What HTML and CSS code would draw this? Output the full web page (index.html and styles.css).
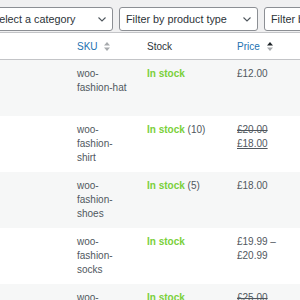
FILE: index.html
```html
<!DOCTYPE html>
<html lang="en">
<head>
    <meta charset="UTF-8">
    <meta name="viewport" content="width=device-width, initial-scale=1.0">
    <title>Products</title>
    <link rel="stylesheet" href="styles.css">
</head>
<body>

    <div class="filters">
        <select class="filter-select first">
            <option>Select a category</option>
        </select>
        <select class="filter-select">
            <option>Filter by product type</option>
        </select>
        <select class="filter-select">
            <option>Filter by stock status</option>
        </select>
    </div>

    <table class="products">
        <colgroup>
            <col class="col-name">
            <col class="col-sku">
            <col class="col-stock">
            <col class="col-price">
            <col class="col-rest">
        </colgroup>
        <thead>
            <tr>
                <th></th>
                <th class="sortable">
                    <a href="#">SKU
                        <svg class="sort-icon" width="6" height="9" viewBox="0 0 6 9">
                            <path d="M3 0 L6 3.5 H0 Z" fill="#a7aaad"/>
                            <path d="M3 9 L6 5.5 H0 Z" fill="#a7aaad"/>
                        </svg>
                    </a>
                </th>
                <th>Stock</th>
                <th class="sortable">
                    <a href="#">Price
                        <svg class="sort-icon" width="6" height="9" viewBox="0 0 6 9">
                            <path d="M3 0 L6 3.5 H0 Z" fill="#1d2327"/>
                            <path d="M3 9 L6 5.5 H0 Z" fill="#a7aaad"/>
                        </svg>
                    </a>
                </th>
                <th></th>
            </tr>
        </thead>
        <tbody>
            <tr>
                <td></td>
                <td>woo-fashion-hat</td>
                <td><mark class="instock">In stock</mark></td>
                <td>£12.00</td>
                <td></td>
            </tr>
            <tr>
                <td></td>
                <td>woo-fashion-shirt</td>
                <td><mark class="instock">In stock</mark> (10)</td>
                <td><del>£20.00</del> <ins>£18.00</ins></td>
                <td></td>
            </tr>
            <tr>
                <td></td>
                <td>woo-fashion-shoes</td>
                <td><mark class="instock">In stock</mark> (5)</td>
                <td>£18.00</td>
                <td></td>
            </tr>
            <tr>
                <td></td>
                <td>woo-fashion-socks</td>
                <td><mark class="instock">In stock</mark></td>
                <td>£19.99 – £20.99</td>
                <td></td>
            </tr>
            <tr>
                <td></td>
                <td>woo-fashion-sweater</td>
                <td><mark class="instock">In stock</mark></td>
                <td><del>£25.00</del> <ins>£20.00</ins></td>
                <td></td>
            </tr>
        </tbody>
    </table>

</body>
</html>
```

FILE: styles.css
```css
body {
    margin: 0;
    background-color: #f0f0f1;
    font-family: "Liberation Sans", Arial, sans-serif;
    font-size: 10px;
    color: #50575e;
    overflow: hidden;
}

.filters {
    display: flex;
    gap: 6px;
    padding-top: 7px;
    margin-bottom: 1px;
    margin-left: -15px;
}

.filter-select {
    -webkit-appearance: none;
    appearance: none;
    flex: none;
    width: 139px;
    height: 24px;
    padding: 0 20px 0 6px;
    font-family: "Liberation Sans", Arial, sans-serif;
    font-size: 10.8px;
    color: #2c3338;
    background-color: #fff;
    background-image: url("data:image/svg+xml,%3Csvg xmlns='http://www.w3.org/2000/svg' width='8' height='5' viewBox='0 0 8 5'%3E%3Cpath d='M0.5 0.5 L4 4 L7.5 0.5' fill='none' stroke='%2350575e' stroke-width='1.1'/%3E%3C/svg%3E");
    background-repeat: no-repeat;
    background-position: right 6px center;
    border: 1px solid #8c8f94;
    border-radius: 3px;
}

.filter-select.first {
    width: 128px;
}

.products {
    table-layout: fixed;
    width: 360px;
    border-spacing: 0;
    border-top: 1px solid #c3c4c7;
    background-color: #fff;
}

.col-name { width: 69px; }
.col-sku { width: 70px; }
.col-stock { width: 90px; }
.col-price { width: 70px; }
.col-rest { width: 61px; }

.products th {
    text-align: left;
    font-weight: normal;
    color: #2c3338;
    line-height: 14px;
    padding: 7px 8px 5px;
    border-bottom: 1px solid #c3c4c7;
}

.products th a {
    color: #2271b1;
    text-decoration: none;
}

.sort-icon {
    margin-left: 4px;
    vertical-align: -1px;
}

.products tbody tr {
    height: 56px;
}

.products tbody tr:nth-child(odd) {
    background-color: #f6f7f7;
}

.products td {
    vertical-align: top;
    line-height: 14px;
    padding: 7px 8px;
}

mark.instock {
    background: none;
    color: #7ad03a;
    font-weight: bold;
}

del {
    color: #50575e;
}

ins {
    text-decoration: underline;
}
```
